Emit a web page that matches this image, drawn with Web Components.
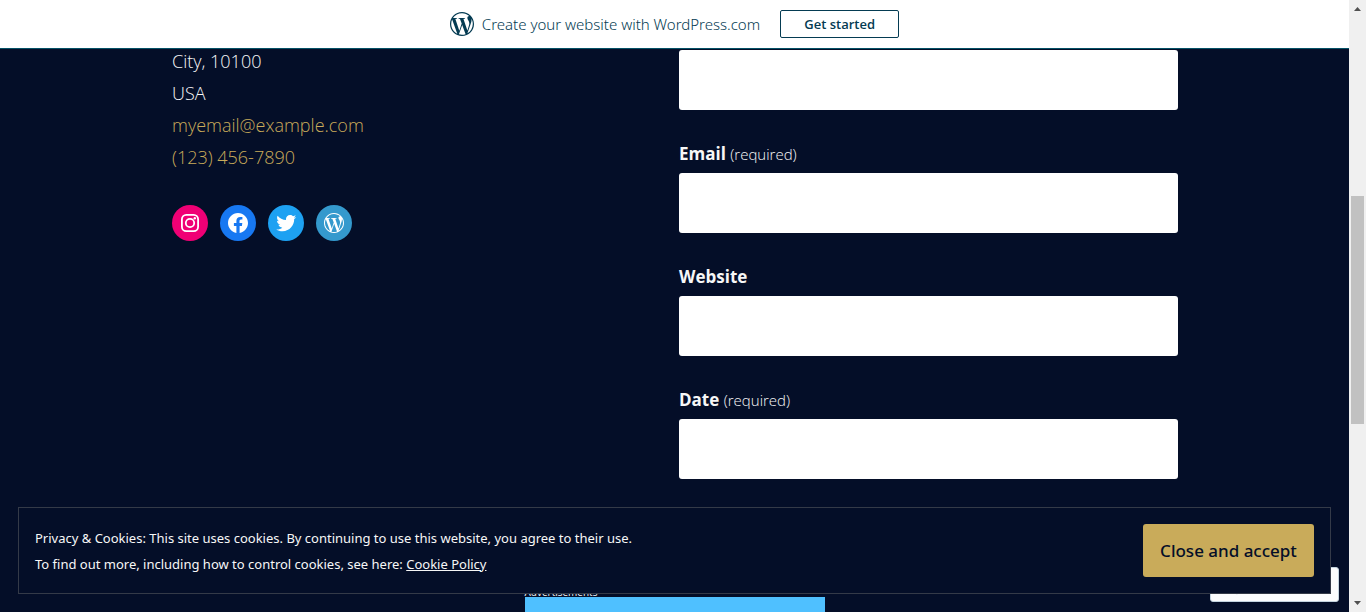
<!DOCTYPE html>
<html lang="en">
<head>
<meta charset="utf-8">
<title>Contact</title>
<style>
  html, body { margin: 0; height: 100%; }
  body {
    overflow: hidden;
    background: #040e28;
    color: #f7f7f7;
    font-family: "Open Sans", "Noto Sans", sans-serif;
    --gold: #c9ab5a;
    --navy: #040e28;
    --banner: #043b52;
  }
</style>
</head>
<body>
<site-page>
  <signup-banner slot="banner">Create your website with WordPress.com</signup-banner>
  <contact-details slot="aside"></contact-details>
  <form-field slot="form" name="name" hint="(required)" bare>Name</form-field>
  <form-field slot="form" name="email" hint="(required)">Email</form-field>
  <form-field slot="form" name="website">Website</form-field>
  <form-field slot="form" name="date" hint="(required)">Date</form-field>
  <ad-slot slot="ad">Advertisements</ad-slot>
  <action-bar slot="overlay"></action-bar>
  <cookie-notice slot="overlay">Privacy &amp; Cookies: This site uses cookies. By continuing to use this website, you agree to their use.</cookie-notice>
  <scroll-rail slot="rail"></scroll-rail>
</site-page>

<script>
const WP = 'M12.158,12.786L9.46,20.625c0.806,0.237,1.657,0.366,2.54,0.366c1.047,0,2.051-0.181,2.986-0.51c-0.024-0.038-0.046-0.079-0.065-0.124L12.158,12.786z M3.009,12c0,3.559,2.068,6.634,5.067,8.092L3.788,8.341C3.289,9.459,3.009,10.696,3.009,12z M18.069,11.546c0-1.112-0.399-1.881-0.741-2.48c-0.456-0.741-0.883-1.368-0.883-2.109c0-0.826,0.627-1.596,1.51-1.596c0.04,0,0.078,0.005,0.116,0.007C16.472,3.904,14.34,3.009,12,3.009c-3.141,0-5.904,1.612-7.512,4.052c0.211,0.007,0.41,0.011,0.579,0.011c0.94,0,2.396-0.114,2.396-0.114C7.947,6.93,8.004,7.642,7.52,7.699c0,0-0.487,0.057-1.029,0.085l3.274,9.739l1.968-5.901l-1.401-3.838C9.848,7.756,9.389,7.699,9.389,7.699C8.904,7.67,8.961,6.93,9.446,6.958c0,0,1.484,0.114,2.368,0.114c0.94,0,2.397-0.114,2.397-0.114c0.485-0.028,0.542,0.684,0.057,0.741c0,0-0.488,0.057-1.029,0.085l3.249,9.665l0.897-2.996C17.841,13.284,18.069,12.316,18.069,11.546z M19.889,7.686c0.039,0.286,0.06,0.593,0.06,0.924c0,0.912-0.171,1.938-0.684,3.22l-2.746,7.94c2.673-1.558,4.47-4.454,4.47-7.771C20.991,10.436,20.591,8.967,19.889,7.686z M12,22C6.486,22,2,17.514,2,12C2,6.486,6.486,2,12,2c5.514,0,10,4.486,10,10C22,17.514,17.514,22,12,22z';

function define(name, markup, setup) {
  const template = document.createElement('template');
  template.innerHTML = markup;
  customElements.define(name, class extends HTMLElement {
    connectedCallback() {
      if (this.shadowRoot) return;
      this.attachShadow({ mode: 'open' }).append(template.content.cloneNode(true));
      if (setup) setup(this, this.shadowRoot);
    }
  });
}

define('site-page', `
  <style>
    :host { display: grid; grid-template-columns: minmax(0, 1fr) 17px; height: 100vh; }
    .view { position: relative; overflow: hidden; height: 100vh; }
    main { display: grid; grid-template-columns: 1fr 1fr; gap: 8px; padding: 45px 171px 0 172px; }
    form { padding-top: 5px; }
  </style>
  <div class="view">
    <slot name="banner"></slot>
    <main>
      <slot name="aside"></slot>
      <form><slot name="form"></slot></form>
    </main>
    <slot name="ad"></slot>
    <slot name="overlay"></slot>
  </div>
  <slot name="rail"></slot>`);

define('signup-banner', `
  <style>
    :host {
      position: absolute; z-index: 2; top: 0; left: 0; right: 0;
      display: flex; align-items: center; justify-content: center;
      height: 48px; background: #fff; color: var(--banner);
      border-bottom: 1px solid #045166; font-family: "Noto Sans", sans-serif; font-size: 15px; font-weight: 300;
    }
    svg { width: 24px; height: 24px; margin-right: 8px; fill: currentColor; }
    button {
      width: 119px; height: 28px; margin-left: 20px; padding: 0;
      border: 1px solid var(--banner); border-radius: 2px; background: #fff;
      color: inherit; font: 600 13px "Open Sans", sans-serif;
    }
  </style>
  <svg viewBox="2 2 20 20" aria-hidden="true"><path d="${WP}"/></svg>
  <span><slot></slot></span>
  <button type="button">Get started</button>`);

define('contact-details', `
  <style>
    :host { display: block; font-size: 18px; font-weight: 300; line-height: 32px; }
    address { font-style: normal; }
    a { color: var(--gold); text-decoration: none; }
    nav { display: flex; gap: 12px; margin-top: 32px; }
  </style>
  <address>
    City, 10100<br>
    USA<br>
    <a href="mailto:myemail@example.com">myemail@example.com</a><br>
    <a href="tel:1234567890">(123) 456-7890</a>
  </address>
  <nav aria-label="Social">
    <social-link label="Instagram" color="#f00075"><svg viewBox="0 0 24 24" fill="none" stroke="#fff" stroke-width="1.8"><rect x="3.9" y="3.9" width="16.2" height="16.2" rx="4.4"/><circle cx="12" cy="12" r="4.2"/><circle cx="16.8" cy="7.2" r="1.2" fill="#fff" stroke="none"/></svg></social-link>
    <social-link label="Facebook" color="#1778f2"><svg viewBox="0 0 24 24" fill="#fff"><path d="M12 2C6.5 2 2 6.5 2 12c0 5 3.7 9.1 8.4 9.9v-7H7.9V12h2.5V9.8c0-2.5 1.5-3.9 3.8-3.9 1.1 0 2.2.2 2.2.2v2.5h-1.3c-1.2 0-1.6.8-1.6 1.6V12h2.8l-.4 2.9h-2.3v7C18.3 21.1 22 17 22 12c0-5.5-4.5-10-10-10z"/></svg></social-link>
    <social-link label="Twitter" color="#1da1f2"><svg viewBox="0 0 24 24" fill="#fff"><path d="M22.23,5.924c-0.736,0.326-1.527,0.547-2.357,0.646c0.847-0.508,1.498-1.312,1.804-2.27c-0.793,0.47-1.671,0.812-2.606,0.996C18.324,4.498,17.257,4,16.077,4c-2.266,0-4.103,1.837-4.103,4.103c0,0.322,0.036,0.635,0.106,0.935C8.67,8.867,5.647,7.234,3.623,4.751C3.27,5.357,3.067,6.062,3.067,6.814c0,1.424,0.724,2.679,1.825,3.415c-0.673-0.021-1.305-0.206-1.859-0.513c0,0.017,0,0.034,0,0.052c0,1.988,1.414,3.647,3.292,4.023c-0.344,0.094-0.707,0.144-1.081,0.144c-0.264,0-0.521-0.026-0.772-0.074c0.522,1.63,2.038,2.816,3.833,2.85c-1.404,1.1-3.174,1.756-5.096,1.756c-0.331,0-0.658-0.019-0.979-0.057c1.816,1.164,3.973,1.843,6.29,1.843c7.547,0,11.675-6.252,11.675-11.675c0-0.178-0.004-0.355-0.012-0.531C20.985,7.47,21.68,6.747,22.23,5.924z"/></svg></social-link>
    <social-link label="WordPress" color="#3499cd"><svg viewBox="0 0 24 24" fill="#fff"><path d="${WP}"/></svg></social-link>
  </nav>`);

define('social-link', `
  <style>
    :host { display: block; }
    a { display: grid; place-items: center; width: 36px; height: 36px; border-radius: 50%; }
    ::slotted(svg) { display: block; width: 24px; height: 24px; }
  </style>
  <a href="#"><slot></slot></a>`, (host, root) => {
  const a = root.querySelector('a');
  a.setAttribute('aria-label', host.getAttribute('label'));
  a.style.background = host.getAttribute('color');
});

define('form-field', `
  <style>
    :host { display: block; }
    label { display: block; padding: 28px 0 3px; font-size: 17px; font-weight: 700; line-height: 32px; }
    small { font-size: 15px; font-weight: 300; line-height: 16px; }
    :host([bare]) label { display: none; }
    input {
      display: block; box-sizing: border-box; width: 100%; height: 60px; padding: 16px;
      border: 0; border-radius: 3px; background: #fff; font: 18px "Open Sans", sans-serif;
    }
  </style>
  <label for="field"><slot></slot> <small></small></label>
  <input id="field" type="text">`, (host, root) => {
  root.querySelector('small').textContent = host.getAttribute('hint') || '';
  const input = root.querySelector('input');
  input.name = host.getAttribute('name');
  input.setAttribute('aria-label', host.textContent);
});

define('ad-slot', `
  <style>
    :host { display: block; width: 300px; margin: 108px auto 0; font-size: 10px; line-height: 10px; }
    .creative { height: 250px; background: #4fc0ff; }
  </style>
  <slot></slot>
  <div class="creative"></div>`);

define('action-bar', `
  <style>
    :host { position: absolute; right: 10px; bottom: 10px; }
    button {
      display: flex; align-items: center; width: 129px; height: 35px; padding: 0 20px;
      border: 1px solid #c3d3de; border-radius: 3px; background: #fbfcfd;
    }
    svg { width: 20px; height: 20px; fill: none; stroke: #2c6a94; stroke-width: 2; }
  </style>
  <button type="button" aria-label="Subscribe"><svg viewBox="0 0 24 24"><path d="M4 5h16v12h-8l-4 4v-4H4z"/></svg></button>`);

define('cookie-notice', `
  <style>
    :host {
      position: absolute; left: 18px; right: 18px; bottom: 18px;
      display: flex; align-items: center; justify-content: space-between; gap: 16px;
      padding: 16px; border: 1px solid #343a48; background: var(--navy);
      font-family: "Noto Sans", sans-serif; font-size: 13px; line-height: 26px;
    }
    p { margin: 0; }
    a { color: inherit; }
    button {
      flex: none; width: 171px; height: 53px; padding: 0; border: 0; border-radius: 3px;
      background: var(--gold); color: var(--navy); font: 500 17px "Noto Sans", sans-serif;
    }
  </style>
  <p><slot></slot><br>To find out more, including how to control cookies, see here: <a href="#">Cookie Policy</a></p>
  <button type="button">Close and accept</button>`);

define('scroll-rail', `
  <style>
    :host { display: flex; flex-direction: column; background: #f0f0f0; }
    svg { width: 17px; height: 17px; fill: #505050; flex: none; }
    .before { flex: 179; }
    .thumb { flex: 228; margin: 0 2px; background: #c1c1c1; }
    .after { flex: 171; }
  </style>
  <svg viewBox="0 0 17 17"><path d="M5 11h7L8.500 7z"/></svg>
  <div class="before"></div><div class="thumb"></div><div class="after"></div>
  <svg viewBox="0 0 17 17"><path d="M5 6h7L8.500 10z"/></svg>`);
</script>
</body>
</html>
